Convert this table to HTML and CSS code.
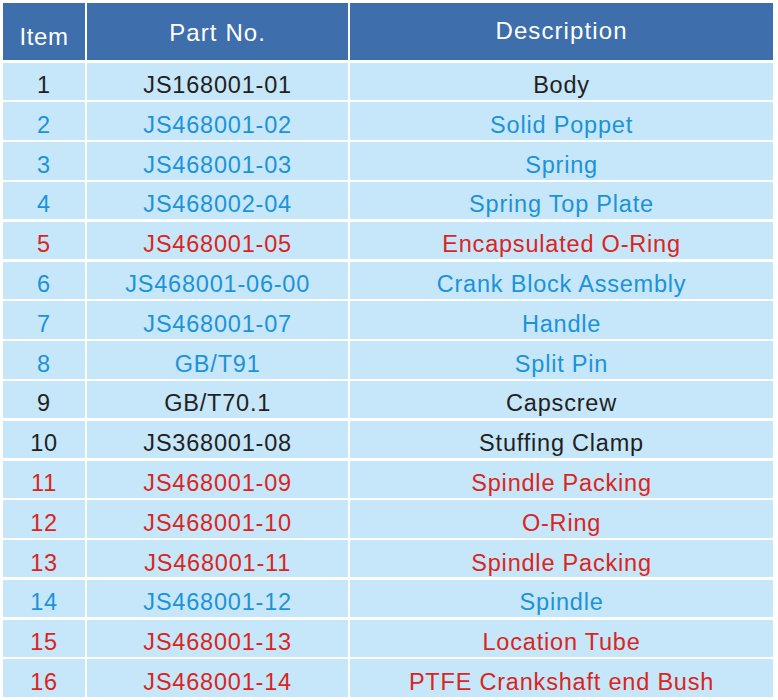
FILE: index.html
```html
<!DOCTYPE html>
<html lang="en">
<head>
<meta charset="utf-8">
<title>Parts List</title>
<link rel="stylesheet" href="styles.css">
</head>
<body>
<div class="table">
  <div class="head head-item">Item</div>
  <div class="head head-part">Part No.</div>
  <div class="head head-desc">Description</div>

  <div class="cell k">1</div><div class="cell k">JS168001-01</div><div class="cell k">Body</div>
  <div class="cell b">2</div><div class="cell b">JS468001-02</div><div class="cell b">Solid Poppet</div>
  <div class="cell b">3</div><div class="cell b">JS468001-03</div><div class="cell b">Spring</div>
  <div class="cell b">4</div><div class="cell b">JS468002-04</div><div class="cell b">Spring Top Plate</div>
  <div class="cell r">5</div><div class="cell r">JS468001-05</div><div class="cell r">Encapsulated O-Ring</div>
  <div class="cell b">6</div><div class="cell b">JS468001-06-00</div><div class="cell b">Crank Block Assembly</div>
  <div class="cell b">7</div><div class="cell b">JS468001-07</div><div class="cell b">Handle</div>
  <div class="cell b">8</div><div class="cell b">GB/T91</div><div class="cell b">Split Pin</div>
  <div class="cell k">9</div><div class="cell k">GB/T70.1</div><div class="cell k">Capscrew</div>
  <div class="cell k">10</div><div class="cell k">JS368001-08</div><div class="cell k">Stuffing Clamp</div>
  <div class="cell r">11</div><div class="cell r">JS468001-09</div><div class="cell r">Spindle Packing</div>
  <div class="cell r">12</div><div class="cell r">JS468001-10</div><div class="cell r">O-Ring</div>
  <div class="cell r">13</div><div class="cell r">JS468001-11</div><div class="cell r">Spindle Packing</div>
  <div class="cell b">14</div><div class="cell b">JS468001-12</div><div class="cell b">Spindle</div>
  <div class="cell r">15</div><div class="cell r">JS468001-13</div><div class="cell r">Location Tube</div>
  <div class="cell r">16</div><div class="cell r">JS468001-14</div><div class="cell r">PTFE Crankshaft end Bush</div>
</div>
</body>
</html>
```

FILE: styles.css
```css
html, body {
  margin: 0;
  padding: 0;
  background: #ffffff;
}

body {
  font-family: "Liberation Sans", Arial, sans-serif;
}

.table {
  display: grid;
  grid-template-columns: 82px 260.5px 422.5px;
  grid-template-rows: 57.3px repeat(16, 37.4px);
  gap: 2.4px;
  padding: 3px 0 0 3px;
}

.head {
  background: #3e6eab;
  color: #ffffff;
  font-size: 24px;
  letter-spacing: 1.1px;
  display: flex;
  justify-content: center;
  align-items: flex-start;
  line-height: 1;
  box-sizing: border-box;
}

.head-item {
  padding-top: 22px;
  letter-spacing: 0.6px;
}

.head-part {
  padding-top: 18px;
}

.head-desc {
  padding-top: 16px;
}

.cell {
  background: #c6e6f9;
  font-size: 23.5px;
  letter-spacing: 0.8px;
  display: flex;
  align-items: center;
  justify-content: center;
  padding-top: 9px;
  box-sizing: border-box;
  line-height: 1;
  white-space: nowrap;
}

.k { color: #231f20; }
.b { color: #1b93d8; }
.r { color: #da251d; }
```
